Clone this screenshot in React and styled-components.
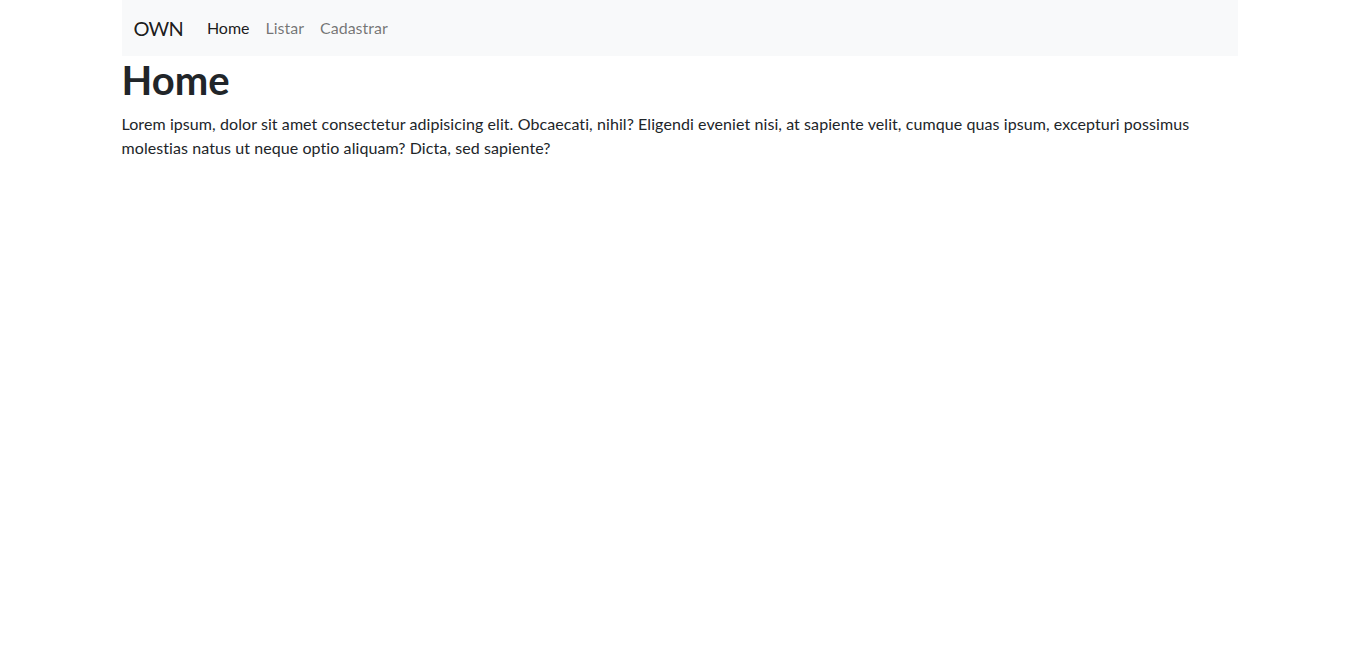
import styled, { createGlobalStyle } from "styled-components";

const GlobalStyle = createGlobalStyle`
  body {
    margin: 0;
    font-family: "Segoe UI", Lato, "Noto Sans", sans-serif;
    font-size: 16px;
    line-height: 1.5;
    color: #212529;
    background: #fff;
  }
`;

const Container = styled.div`
  width: 1116px;
  margin: 0 auto;
`;

const Navbar = styled.nav`
  display: flex;
  align-items: center;
  background: #f8f9fa;
  padding: 8px 12px;
  height: 56px;
  box-sizing: border-box;
`;

const Brand = styled.a`
  font-size: 20px;
  line-height: 30px;
  letter-spacing: -0.8px;
  color: rgba(0, 0, 0, 0.9);
  margin-right: 16px;
  text-decoration: none;
`;

const NavList = styled.ul`
  display: flex;
  list-style: none;
  margin: 0;
  padding: 0;
`;

const NavLink = styled.a`
  display: block;
  padding: 8px;
  color: ${(p) => (p.$active ? "rgba(0, 0, 0, 0.9)" : "rgba(0, 0, 0, 0.55)")};
  text-decoration: none;
`;

const Title = styled.h1`
  font-size: 40px;
  font-weight: 700;
  line-height: 1.2;
  margin: 0 0 8px;
`;

const Text = styled.p`
  margin: 0 0 16px;
  letter-spacing: 0.08px;
`;

const links = [
  { label: "Home", active: true },
  { label: "Listar" },
  { label: "Cadastrar" },
];

export default function App() {
  return (
    <>
      <GlobalStyle />
      <Container>
        <Navbar>
          <Brand href="#">OWN</Brand>
          <NavList>
            {links.map((l) => (
              <li key={l.label}>
                <NavLink href="#" $active={l.active}>
                  {l.label}
                </NavLink>
              </li>
            ))}
          </NavList>
        </Navbar>
        <Title>Home</Title>
        <Text>
          Lorem ipsum, dolor sit amet consectetur adipisicing elit. Obcaecati,
          nihil? Eligendi eveniet nisi, at sapiente velit, cumque quas ipsum,
          excepturi possimus molestias natus ut neque optio aliquam? Dicta, sed
          sapiente?
        </Text>
      </Container>
    </>
  );
}
